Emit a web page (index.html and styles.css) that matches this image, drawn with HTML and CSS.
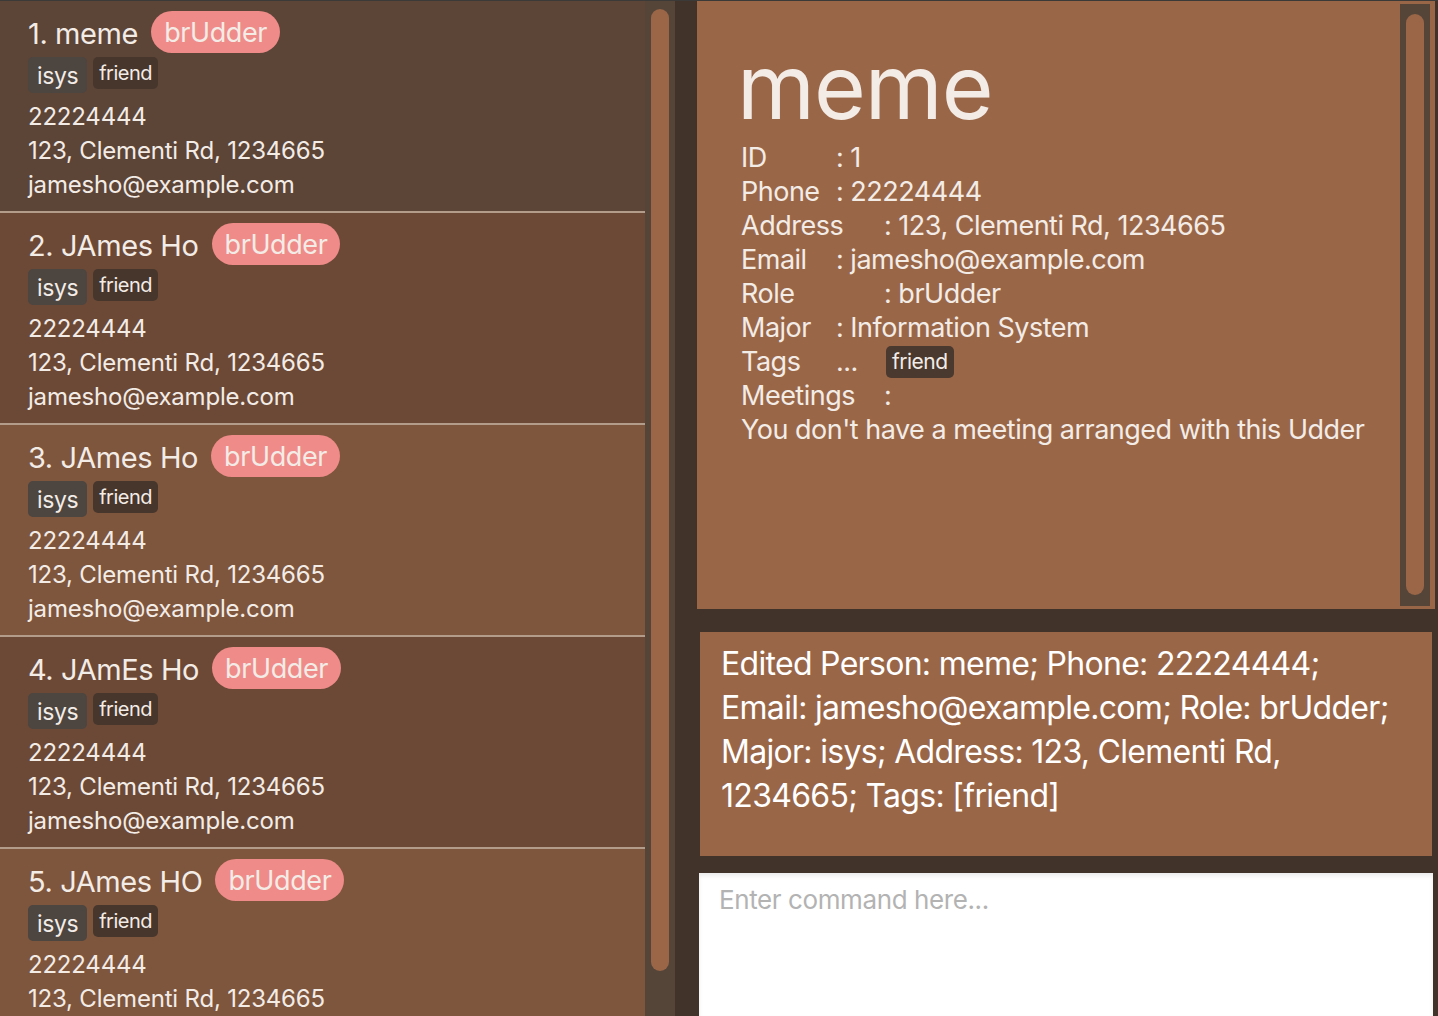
FILE: index.html
```html
<!DOCTYPE html>
<html>
<head>
<meta charset="utf-8">
<link rel="stylesheet" href="styles.css">
</head>
<body>
<div class="app">
  <div class="left">
    <div class="list">
      <div class="cell c1">
        <div class="name-row"><span class="name">1. meme</span><span class="role">brUdder</span></div>
        <div class="tags"><span class="major">isys</span><span class="tag">friend</span></div>
        <div class="line">22224444</div>
        <div class="line">123, Clementi Rd, 1234665</div>
        <div class="line">jamesho@example.com</div>
      </div>
      <div class="cell c2">
        <div class="name-row"><span class="name">2. JAmes Ho</span><span class="role">brUdder</span></div>
        <div class="tags"><span class="major">isys</span><span class="tag">friend</span></div>
        <div class="line">22224444</div>
        <div class="line">123, Clementi Rd, 1234665</div>
        <div class="line">jamesho@example.com</div>
      </div>
      <div class="cell c3">
        <div class="name-row"><span class="name">3. JAmes Ho</span><span class="role">brUdder</span></div>
        <div class="tags"><span class="major">isys</span><span class="tag">friend</span></div>
        <div class="line">22224444</div>
        <div class="line">123, Clementi Rd, 1234665</div>
        <div class="line">jamesho@example.com</div>
      </div>
      <div class="cell c2">
        <div class="name-row"><span class="name">4. JAmEs Ho</span><span class="role">brUdder</span></div>
        <div class="tags"><span class="major">isys</span><span class="tag">friend</span></div>
        <div class="line">22224444</div>
        <div class="line">123, Clementi Rd, 1234665</div>
        <div class="line">jamesho@example.com</div>
      </div>
      <div class="cell c3">
        <div class="name-row"><span class="name">5. JAmes HO</span><span class="role">brUdder</span></div>
        <div class="tags"><span class="major">isys</span><span class="tag">friend</span></div>
        <div class="line">22224444</div>
        <div class="line">123, Clementi Rd, 1234665</div>
        <div class="line">jamesho@example.com</div>
      </div>
    </div>
    <div class="vbar"><div class="thumb"></div></div>
  </div>
  <div class="right">
    <div class="detail">
      <div class="detail-body">
        <div class="big">meme</div>
        <div class="dline"><span class="lab w1">ID</span><span>: 1</span></div>
        <div class="dline"><span class="lab w1">Phone</span><span>: 22224444</span></div>
        <div class="dline"><span class="lab w2">Address</span><span>: 123, Clementi Rd, 1234665</span></div>
        <div class="dline"><span class="lab w1">Email</span><span>: jamesho@example.com</span></div>
        <div class="dline"><span class="lab w2">Role</span><span>: brUdder</span></div>
        <div class="dline"><span class="lab w1">Major</span><span>: Information System</span></div>
        <div class="dline"><span class="lab w1">Tags</span><span class="dots">...</span><span class="dtag">friend</span></div>
        <div class="dline"><span class="lab w2">Meetings</span><span>:</span></div>
        <div class="dline">You don't have a meeting arranged with this Udder</div>
      </div>
      <div class="dbar"><div class="dthumb"></div></div>
    </div>
    <div class="result">Edited Person: meme; Phone: 22224444; Email: jamesho@example.com; Role: brUdder; Major: isys; Address: 123, Clementi Rd, 1234665; Tags: [friend]</div>
    <div class="command"><input class="cmd-input" type="text" placeholder="Enter command here..."></div>
  </div>
</div>
</body>
</html>
```
FILE: styles.css
```css
html, body {
  margin: 0;
  padding: 0;
  height: 100%;
  overflow: hidden;
}
body {
  background: #42332a;
  font-family: Inter, "Noto Sans", sans-serif;
  color: #f3ece6;
  border-top: 1px solid #3b3a38;
  box-sizing: border-box;
}
.app {
  display: flex;
  height: 1015px;
  gap: 22px;
}
.left {
  display: flex;
  width: 675px;
  flex: none;
}
.list {
  width: 645px;
  overflow: hidden;
}
.cell {
  box-sizing: content-box;
  height: 200px;
  padding: 10px 0 0 28px;
  border-bottom: 2px solid #b39c8a;
}
.c1 { background: #5c4437; }
.c2 { background: #6c4936; }
.c3 { background: #7e553d; }
.name-row {
  display: flex;
  align-items: center;
  height: 42px;
  gap: 13px;
}
.name {
  font-size: 29px;
  letter-spacing: -0.4px;
  padding-top: 2px;
}
.role {
  background: #ef8b89;
  border-radius: 21px;
  height: 42px;
  line-height: 43px;
  padding: 0 13px;
  font-size: 27px;
  letter-spacing: -0.4px;
}
.tags {
  display: flex;
  align-items: flex-start;
  gap: 6px;
  margin-top: 4px;
  height: 36px;
}
.major {
  background: #4c4540;
  border-radius: 5px;
  height: 36px;
  line-height: 38px;
  padding: 0 9px;
  font-size: 23px;
  letter-spacing: -0.4px;
}
.tag {
  background: #47362c;
  border-radius: 5px;
  height: 32px;
  line-height: 32px;
  padding: 0 6px;
  font-size: 20px;
  letter-spacing: -0.5px;
}
.tags + .line { margin-top: 6px; }
.line {
  height: 34px;
  line-height: 35px;
  font-size: 24px;
  letter-spacing: -0.2px;
}
.vbar {
  width: 30px;
  background: #554539;
  padding: 8px 6px 0;
  box-sizing: border-box;
}
.thumb {
  height: 962px;
  background: #9a6647;
  border-radius: 9px;
}
.right {
  display: flex;
  flex-direction: column;
  width: 741px;
}
.detail {
  width: 738px;
  height: 608px;
  background: #9a6648;
  display: flex;
  flex: none;
}
.detail-body {
  flex: 1;
  padding-left: 44px;
  padding-top: 32px;
}
.big {
  font-size: 89px;
  line-height: 108px;
  letter-spacing: -1px;
  margin-left: -4px;
}
.dline {
  height: 34px;
  line-height: 34px;
  font-size: 27px;
  letter-spacing: -0.5px;
  display: flex;
  align-items: center;
  white-space: nowrap;
}
.lab { display: inline-block; }
.w1 { width: 95px; }
.w2 { width: 143px; }
.dots { width: 50px; display: inline-block; }
.dtag {
  background: #4a392e;
  border-radius: 5px;
  height: 32px;
  line-height: 32px;
  padding: 0 6px;
  font-size: 21px;
  letter-spacing: -0.5px;
}
.dbar {
  width: 30px;
  height: 602px;
  margin: 3px 5px 0 0;
  background: #554539;
  padding: 10px 6px 0;
  box-sizing: border-box;
}
.dthumb {
  height: 581px;
  background: #9a6647;
  border-radius: 9px;
}
.result {
  margin: 23px 0 0 3px;
  width: 732px;
  height: 224px;
  box-sizing: border-box;
  background: #9a6648;
  padding: 10px 20px 0 21px;
  font-size: 32px;
  line-height: 44px;
  letter-spacing: -0.7px;
  color: #ffffff;
  flex: none;
}
.command {
  margin: 17px 0 0 2px;
  width: 734px;
  flex: 1;
  background: #ffffff;
  box-shadow: inset 0 3px 4px rgba(0,0,0,0.08);
}
.cmd-input {
  width: 100%;
  box-sizing: border-box;
  border: none;
  background: transparent;
  outline: none;
  font-family: Inter, "Noto Sans", sans-serif;
  font-size: 26px;
  padding: 11px 20px 8px;
  letter-spacing: -0.4px;
  color: #333;
}
.cmd-input::placeholder { color: #b3b3b3; }
```
